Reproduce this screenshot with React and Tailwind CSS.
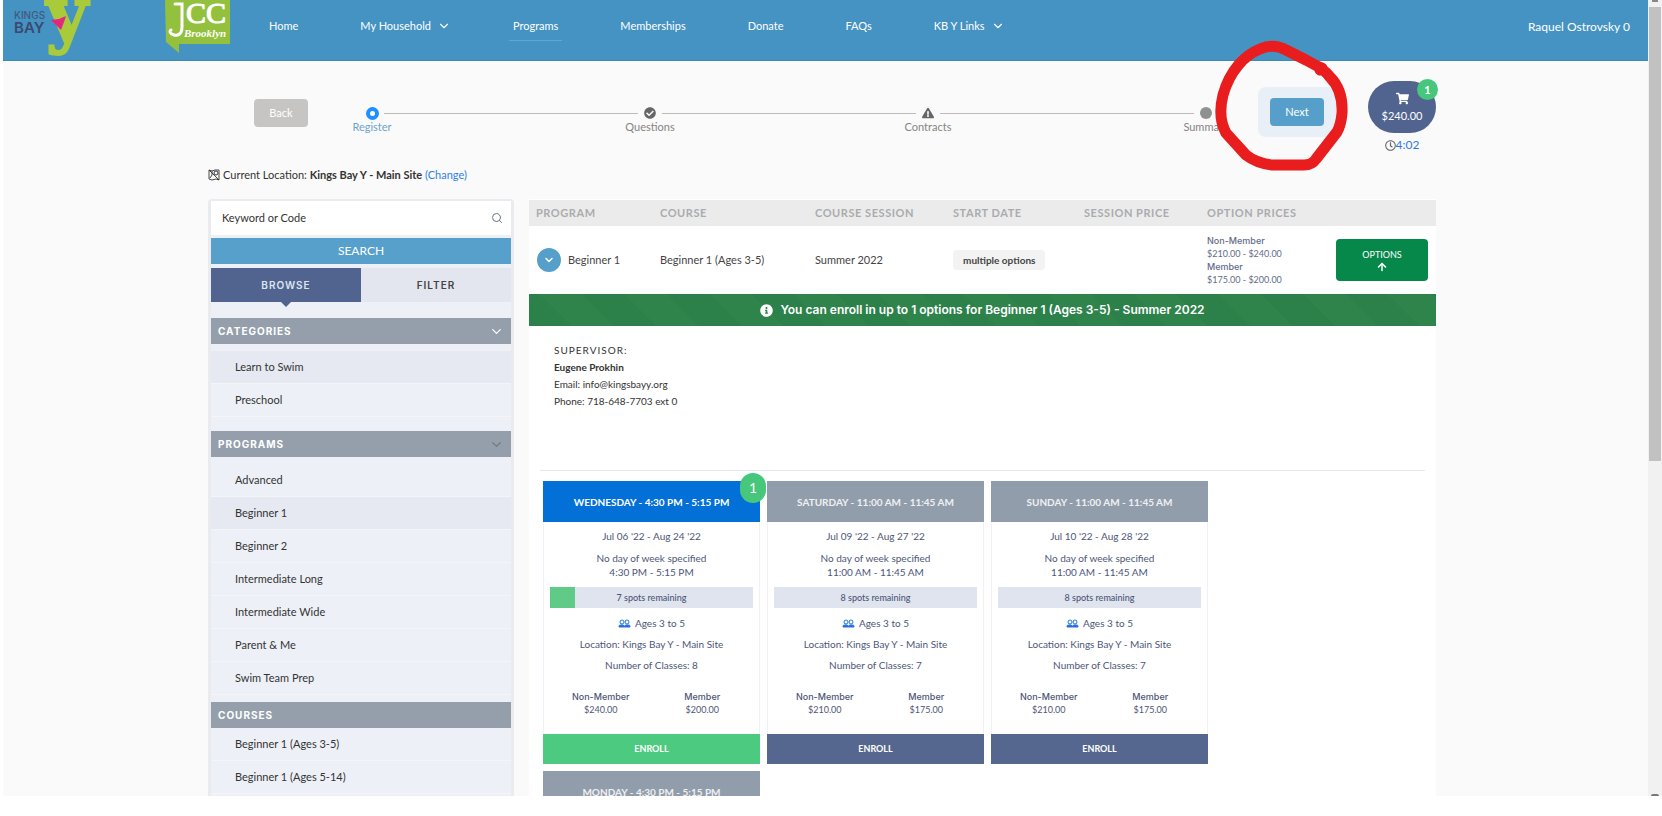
import { useState } from 'react'
import clsx from 'clsx'
import { ArrowUp, ChevronDown, Search } from 'lucide-react'
import { FaCheckCircle, FaExclamationTriangle, FaInfoCircle, FaRegClock, FaShoppingCart } from 'react-icons/fa'

const NAV = [
  { label: 'Home' },
  { label: 'My Household', menu: true },
  { label: 'Programs', active: true },
  { label: 'Memberships' },
  { label: 'Donate' },
  { label: 'FAQs' },
  { label: 'KB Y Links', menu: true },
]

const CATEGORIES = ['Learn to Swim', 'Preschool']
const PROGRAMS = [
  'Advanced',
  'Beginner 1',
  'Beginner 2',
  'Intermediate Long',
  'Intermediate Wide',
  'Parent & Me',
  'Swim Team Prep',
]
const COURSES = ['Beginner 1 (Ages 3-5)', 'Beginner 1 (Ages 5-14)']

const OPTIONS = [
  { day: 'WEDNESDAY', time: '4:30 PM - 5:15 PM', dates: "Jul 06 '22 - Aug 24 '22", spots: 7, filled: 12.5, classes: 8, nonMember: '$240.00', member: '$200.00', selected: true },
  { day: 'SATURDAY', time: '11:00 AM - 11:45 AM', dates: "Jul 09 '22 - Aug 27 '22", spots: 8, filled: 0, classes: 7, nonMember: '$210.00', member: '$175.00' },
  { day: 'SUNDAY', time: '11:00 AM - 11:45 AM', dates: "Jul 10 '22 - Aug 28 '22", spots: 8, filled: 0, classes: 7, nonMember: '$210.00', member: '$175.00' },
  { day: 'MONDAY', time: '4:30 PM - 5:15 PM' },
]

function KingsBayLogo() {
  return (
    <svg width="92" height="60" viewBox="0 0 92 60" className="shrink-0">
      <text x="43" y="39" fontSize="72" fontWeight="700" fontFamily="DejaVu Serif, serif" fill="#a9cb3b" stroke="#a9cb3b" strokeWidth="2">y</text>
      <text x="11" y="19" fontSize="10" fontWeight="500" fontFamily="Inter, sans-serif" fill="#41597c">KINGS</text>
      <text x="11" y="33" fontSize="15" fontWeight="600" fontFamily="Inter, sans-serif" fill="#3a4a70">BAY</text>
      <path d="M48 20 L56 19 L63 16 L61 22 L58 30 L54 26 Z" fill="#e3267f" />
    </svg>
  )
}

function JccLogo() {
  return (
    <svg width="66" height="56" viewBox="0 0 66 56" className="shrink-0">
      <path d="M0 0 H65 V44 H14 V53 L1 42 Z" fill="#93c13d" />
      <path d="M10 4 H17 V27 C17 34 13 36 9 35 C5 34 4 31 6 30" fill="none" stroke="#fff" strokeWidth="3" strokeLinecap="round" />
      <text x="21" y="23" fontSize="30" fontFamily="Liberation Serif, serif" fill="#fff" stroke="#fff">CC</text>
      <text x="19" y="37" fontSize="11" fontWeight="700" fontStyle="italic" fontFamily="Liberation Serif, serif" fill="#fff">Brooklyn</text>
    </svg>
  )
}

function MapIcon() {
  return (
    <svg width="12" height="12" viewBox="0 0 12 12" fill="none" stroke="#333" className="shrink-0">
      <path d="M1 1 L4 2 L7 1 L11 1 V11 L8 10 L4 11 L1 10 Z M1 1 L11 11 M4 2 V6 L2 9" strokeWidth="0.9" />
      <circle cx="8" cy="4" r="2" />
    </svg>
  )
}

function PeopleIcon() {
  return (
    <svg width="13" height="9" viewBox="0 0 13 9" fill="none" stroke="#2671e0" className="shrink-0">
      <circle cx="4" cy="3" r="2" />
      <circle cx="9" cy="3" r="2" />
      <path d="M1 8 V7 Q1 6 3 6 H5 L6.5 7 L8 6 H10 Q12 6 12 7 V8 Z" fill="#2671e0" />
    </svg>
  )
}

function Header() {
  return (
    <header className="flex h-[61px] items-start border-b border-[#3f88b4] bg-[#4593c2] text-[11px] leading-5 text-white">
      <KingsBayLogo />
      <div className="ml-[70px]">
        <JccLogo />
      </div>
      <nav className="ml-[38px] flex flex-1 gap-[62px] pt-4">
        {NAV.map((item) => (
          <a
            key={item.label}
            href="#"
            className={clsx('relative flex items-center gap-1.5 whitespace-nowrap', item.active && 'after:absolute after:-inset-x-1 after:top-6 after:h-px after:bg-[#5aa9d6]')}
          >
            {item.label}
            {item.menu && <ChevronDown size={14} />}
          </a>
        ))}
      </nav>
      <a href="#" className="mr-[18px] pt-[17px] text-xs leading-5">Raquel Ostrovsky 0</a>
    </header>
  )
}

function Step({ label, active, children }) {
  return (
    <li className="z-10 flex w-20 flex-col items-center">
      <span className="flex h-4 w-6 items-center justify-center bg-[#fafafa]">{children}</span>
      <span className={active ? 'text-[#6da3cc]' : 'text-[#858585]'}>{label}</span>
    </li>
  )
}

function Stepper() {
  return (
    <div className="flex items-start pt-5">
      <button disabled className="mt-[18px] ml-[46px] h-7 w-[54px] rounded-sm bg-[#c6c5c4] text-[11px] text-white">Back</button>
      <ol className="relative mt-6 ml-6 flex flex-1 justify-between text-[11px] leading-3 before:absolute before:inset-x-10 before:top-2 before:h-px before:bg-[#bbb]">
        <Step label="Register" active>
          <span className="size-[13px] rounded-full border-4 border-[#1e90ff] bg-white" />
        </Step>
        <Step label="Questions"><FaCheckCircle size={12} color="#666" /></Step>
        <Step label="Contracts"><FaExclamationTriangle size={12} color="#666" /></Step>
        <Step label="Summary"><span className="size-3 rounded-full bg-[#8f918f]" /></Step>
      </ol>
      <div className="relative z-20 mt-[6px] ml-3 rounded-lg bg-[#e8eff6] px-3 py-[11px]">
        <button className="block h-7 w-[54px] rounded-sm bg-[#569fca] text-[11px] text-white">Next</button>
        <svg width="140" height="136" viewBox="0 0 140 136" fill="none" className="pointer-events-none absolute -top-[52px] -left-[48px] max-w-none">
          <path
            d="M112 33 L107 31 L96 25 L76 15 Q64 8 50 14 C35 20 20 35 13 60 C9 76 10 87 16 98 L36 120 Q46 128 62 130 L94 130 Q102 130 106 124 L127 97 Q131 90 132 78 C133 58 126 48 120 42 Q113 33 110 35"
            stroke="#e91c1e"
            strokeWidth="11"
            strokeLinecap="round"
            strokeLinejoin="round"
          />
        </svg>
      </div>
      <div className="ml-[32px] flex flex-col items-center">
        <button className="relative flex h-[52px] w-[68px] flex-col items-center justify-center gap-1 rounded-[26px] bg-[#51648f] text-[11px] leading-[14px] text-white">
          <FaShoppingCart size={13} />
          $240.00
          <span className="absolute -top-0.5 -right-0.5 flex size-[21px] items-center justify-center rounded-full bg-[#47c77c] font-bold">1</span>
        </button>
        <a href="#" className="mt-1 flex items-center text-xs text-[#2f7ae5]">
          <FaRegClock size={11} color="#666" />
          4:02
        </a>
      </div>
    </div>
  )
}

function GroupTitle({ children, toggle }) {
  return (
    <h3 className="flex h-[26px] items-center justify-between bg-[#959fab] px-[7px] font-['Inter'] text-[10px] font-bold tracking-widest text-white">
      {children}
      {toggle && <ChevronDown size={15} className={toggle === 'light' ? 'text-white' : 'text-[#777]'} />}
    </h3>
  )
}

function ItemList({ items, active }) {
  return (
    <ul>
      {items.map((item) => (
        <li key={item} className={clsx('border-b border-[#f3f5f9]', item === active && 'bg-[#e6e9f1]')}>
          <a href="#" className="block px-6 text-[11px] leading-8 text-[#333]">{item}</a>
        </li>
      ))}
    </ul>
  )
}

function Sidebar() {
  const [tab, setTab] = useState('BROWSE')

  return (
    <aside className="w-[306px] shrink-0 rounded-t-sm border-x-[3px] border-t-2 border-[#e9ebef] bg-[#edf1f7]">
      <div className="flex h-[34px] items-center bg-white pr-2 pl-[11px]">
        <input
          type="text"
          aria-label="Keyword or Code"
          placeholder="Keyword or Code"
          className="min-w-0 flex-1 text-[11px] text-[#333] outline-none placeholder:text-[#333]"
        />
        <Search size={12} className="text-[#66718f]" />
      </div>
      <button className="mt-[3px] block h-[26px] w-full bg-[#56a0cb] text-xs text-white">SEARCH</button>
      <div className="mt-1 flex font-['Inter'] text-[10px] tracking-widest">
        {['BROWSE', 'FILTER'].map((name) => (
          <button
            key={name}
            onClick={() => setTab(name)}
            className={clsx(
              'relative h-[34px] flex-1 font-semibold',
              tab === name
                ? 'bg-[#51648f] text-[#dfe5f0] after:absolute after:top-full after:left-1/2 after:-translate-x-1/2 after:border-x-[5px] after:border-t-[5px] after:border-x-transparent after:border-t-[#51648f]'
                : 'bg-[#e3e6ef] text-[#444]'
            )}
          >
            {name}
          </button>
        ))}
      </div>
      <div className="mt-4">
        <GroupTitle toggle="light">CATEGORIES</GroupTitle>
      </div>
      <div className="pt-[7px] pb-[14px]">
        <ItemList items={CATEGORIES} active="Learn to Swim" />
      </div>
      <GroupTitle toggle="dark">PROGRAMS</GroupTitle>
      <div className="py-[7px]">
        <ItemList items={PROGRAMS} active="Beginner 1" />
      </div>
      <GroupTitle>COURSES</GroupTitle>
      <ItemList items={COURSES} />
    </aside>
  )
}

function CourseTable() {
  return (
    <table className="w-full table-fixed text-left text-[11px] text-[#444]">
      <colgroup>
        <col className="w-[131px]" />
        <col className="w-[155px]" />
        <col className="w-[138px]" />
        <col className="w-[131px]" />
        <col className="w-[123px]" />
        <col className="w-[129px]" />
        <col />
      </colgroup>
      <thead>
        <tr className="h-[26px] bg-[#ecebeb] tracking-wider text-[#a9abae]">
          <th className="pl-[7px]">PROGRAM</th>
          <th>COURSE</th>
          <th>COURSE SESSION</th>
          <th>START DATE</th>
          <th>SESSION PRICE</th>
          <th>OPTION PRICES</th>
          <th aria-label="Actions" />
        </tr>
      </thead>
      <tbody>
        <tr className="h-[68px]">
          <td className="pl-2">
            <div className="flex items-center gap-[7px]">
              <button aria-label="Collapse" className="flex size-6 items-center justify-center rounded-full bg-[#569fca] text-white">
                <ChevronDown size={12} strokeWidth={3} />
              </button>
              Beginner 1
            </div>
          </td>
          <td>Beginner 1 (Ages 3-5)</td>
          <td>Summer 2022</td>
          <td>
            <span className="inline-block rounded-sm bg-[#f3f3f3] px-2.5 text-[10px] leading-5 font-bold">multiple options</span>
          </td>
          <td />
          <td className="text-[9px] leading-[13px] text-[#626b89]">
            <p className="font-['Inter'] font-medium">Non-Member</p>
            <p>$210.00 - $240.00</p>
            <p className="font-['Inter'] font-medium">Member</p>
            <p>$175.00 - $200.00</p>
          </td>
          <td>
            <button className="flex h-[42px] w-[92px] flex-col items-center justify-center rounded-sm bg-[#07884b] text-[9px] leading-[13px] text-white">
              OPTIONS
              <ArrowUp size={12} strokeWidth={3} />
            </button>
          </td>
        </tr>
      </tbody>
    </table>
  )
}

function OptionCard({ option }) {
  return (
    <article className="relative text-center text-[10px] leading-[14px] text-[#4d5677]">
      <h4 className={clsx('flex h-[41px] items-center justify-center font-bold', option.selected ? 'bg-[#0270d6] text-white' : 'bg-[#929dab] text-[#eef0f3]')}>
        {option.day} - {option.time}
      </h4>
      {option.selected && (
        <span className="absolute -top-2 -right-1.5 flex h-[30px] w-[26px] items-center justify-center rounded-full bg-[#47c77c] text-sm text-white">1</span>
      )}
      {option.dates && (
        <>
          <div className="flex h-[212px] flex-col border-x border-[#eff1f6] px-1.5 pt-[7px]">
            <p>{option.dates}</p>
            <p className="mt-2">No day of week specified</p>
            <p>{option.time}</p>
            <div className="relative mt-2 h-[21px] bg-[#dfe4ee]">
              <div className="h-full bg-[#60cb86]" style={{ width: `${option.filled}%` }} />
              <span className="absolute inset-0 text-[9px] leading-[21px] font-medium">{option.spots} spots remaining</span>
            </div>
            <p className="mt-2 flex items-center justify-center gap-1">
              <PeopleIcon />
              Ages 3 to 5
            </p>
            <p className="mt-[7px]">Location: Kings Bay Y - Main Site</p>
            <p className="mt-[7px]">Number of Classes: {option.classes}</p>
            <div className="mt-[18px] grid grid-cols-2 text-[9px] leading-[13px]">
              <div>
                <p className="font-['Inter'] font-medium">Non-Member</p>
                <p>{option.nonMember}</p>
              </div>
              <div>
                <p className="font-['Inter'] font-medium">Member</p>
                <p>{option.member}</p>
              </div>
            </div>
          </div>
          <button className={clsx('block h-[30px] w-full text-[9px] font-bold text-white', option.selected ? 'bg-[#4ccb80]' : 'bg-[#55678f]')}>
            ENROLL
          </button>
        </>
      )}
    </article>
  )
}

function Results() {
  return (
    <main className="min-w-0 flex-1 bg-white pt-px">
      <CourseTable />
      <div className="flex h-8 items-center justify-center gap-[7px] bg-[repeating-linear-gradient(45deg,#2b8149_0_30px,#2f844c_30px_60px)] font-['Inter'] text-xs font-semibold text-white">
        <FaInfoCircle size={13} />
        You can enroll in up to 1 options for Beginner 1 (Ages 3-5) - Summer 2022
      </div>
      <div className="mx-[11px] h-[145px] border-b border-[#e1e7ef] px-3.5 pt-4 text-[10px] leading-[17px] text-[#333]">
        <p className="tracking-widest">SUPERVISOR:</p>
        <p className="font-bold">Eugene Prokhin</p>
        <p>Email: info@kingsbayy.org</p>
        <p>Phone: 718-648-7703 ext 0</p>
      </div>
      <div className="grid grid-cols-[repeat(auto-fill,217px)] gap-[7px] pt-2.5 pr-[200px] pl-3.5">
        {OPTIONS.map((option) => (
          <OptionCard key={option.day} option={option} />
        ))}
      </div>
    </main>
  )
}

function Scrollbar() {
  return (
    <div aria-hidden="true" className="flex w-3.5 shrink-0 flex-col items-center bg-[#f1f1f1]">
      <span className="h-0.5 w-1.5 bg-[#888]" />
      <span className="mt-[5px] mb-auto h-[57%] w-3 bg-[#c1c1c1]" />
      <span className="h-0.5 w-2 rounded-t-full bg-[#777]" />
    </div>
  )
}

export default function App() {
  return (
    <div className="h-screen overflow-hidden bg-white pb-5 pl-[3px] font-['Lato',sans-serif]">
      <div className="flex h-full">
        <div className="min-w-0 flex-1 overflow-hidden bg-[#fafafa]">
          <Header />
          <div className="mx-auto max-w-[1235px] pr-[7px]">
            <Stepper />
            <p className="mt-3 flex h-5 items-center gap-[3px] text-[11px] text-[#333]">
              <MapIcon />
              <span>
                Current Location: <strong>Kings Bay Y - Main Site</strong>{' '}
                <a href="#" className="text-[#2f80e8]">(Change)</a>
              </span>
            </p>
            <div className="mt-[14px] flex gap-[15px]">
              <Sidebar />
              <Results />
            </div>
          </div>
        </div>
        <Scrollbar />
      </div>
    </div>
  )
}
